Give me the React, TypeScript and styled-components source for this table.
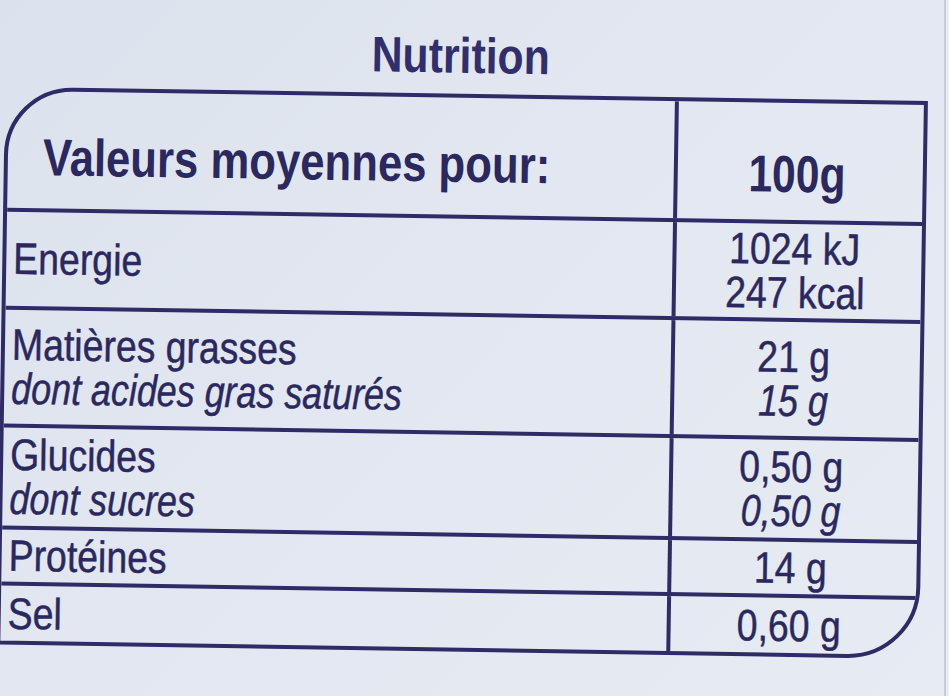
import React from "react";
import styled, { createGlobalStyle } from "styled-components";

const INK = "#2a285f";
const LINE = "#2e2b66";

const GlobalStyle = createGlobalStyle`
  html, body { margin: 0; padding: 0; }
  body { background: #e2e7f1; overflow: hidden; }
  * { box-sizing: border-box; }
`;

const Page = styled.div`
  width: 949px;
  height: 696px;
  overflow: hidden;
  display: flex;
  background: linear-gradient(135deg, #dce2ed 0%, #e2e7f1 45%, #e7ebf3 100%);
  font-family: "Liberation Sans", Arial, Helvetica, sans-serif;
  color: ${INK};
`;

const Label = styled.div`
  width: 944px;
  height: 696px;
  flex: none;
  padding: 31px 0 0 1px;
  display: flex;
  flex-direction: column;
  transform: rotate(0.9deg);
  transform-origin: 474px 348px;
`;

const Fold = styled.div`
  width: 2px;
  height: 696px;
  flex: none;
  background: #c8ccd9;
`;

const Edge = styled.div`
  flex: 1;
  background: #e6eaf3;
`;

const TitleRow = styled.div`
  width: 923px;
  height: 63px;
  display: flex;
  justify-content: center;
  padding-right: 12px;
`;

const Title = styled.h1`
  margin: 0;
  font-size: 50px;
  line-height: 50px;
  font-weight: 700;
  color: #302e6c;
  white-space: nowrap;
  transform: scaleX(0.855);
`;

const Table = styled.div`
  width: 923px;
  border: 4px solid ${LINE};
  border-radius: 68px 0 72px 0;
  overflow: hidden;
  display: flex;
  flex-direction: column;
`;

const Row = styled.div<{ $h: number; $last?: boolean }>`
  height: ${(p) => p.$h}px;
  flex: none;
  display: grid;
  grid-template-columns: 670px 1fr;
  border-bottom: ${(p) => (p.$last ? "none" : `4px solid ${LINE}`)};
`;

const LabelCell = styled.div`
  border-right: 4px solid ${LINE};
  display: flex;
  flex-direction: column;
  justify-content: center;
  padding-left: 7px;
`;

const ValueCell = styled.div`
  display: flex;
  flex-direction: column;
  justify-content: center;
  align-items: center;
  padding-right: 8px;
`;

const HeaderLabelCell = styled.div`
  border-right: 4px solid ${LINE};
  padding: 40px 0 0 35px;
`;

const HeaderValueCell = styled.div`
  display: flex;
  justify-content: center;
  align-items: flex-start;
  padding: 45px 6px 0 0;
`;

const HeaderText = styled.div<{ $center?: boolean }>`
  font-size: 52px;
  line-height: 52px;
  font-weight: 700;
  white-space: nowrap;
  transform: scaleX(${(p) => (p.$center ? 0.82 : 0.84)});
  transform-origin: ${(p) => (p.$center ? "center" : "left")} center;
`;

const Text = styled.div<{ $italic?: boolean; $center?: boolean }>`
  font-size: 44px;
  line-height: 44px;
  font-weight: 400;
  font-style: ${(p) => (p.$italic ? "italic" : "normal")};
  white-space: nowrap;
  -webkit-text-stroke: 0.5px ${INK};
  transform: scaleX(${(p) => (p.$italic ? 0.815 : 0.85)});
  transform-origin: ${(p) => (p.$center ? "center" : "left")} center;
`;

type Line = { text: string; italic?: boolean };
type Item = { h: number; label: Line[]; value: Line[] };

const items: Item[] = [
  { h: 98, label: [{ text: "Energie" }], value: [{ text: "1024 kJ" }, { text: "247 kcal" }] },
  {
    h: 118,
    label: [{ text: "Matières grasses" }, { text: "dont acides gras saturés", italic: true }],
    value: [{ text: "21 g" }, { text: "15 g", italic: true }],
  },
  {
    h: 102,
    label: [{ text: "Glucides" }, { text: "dont sucres", italic: true }],
    value: [{ text: "0,50 g" }, { text: "0,50 g", italic: true }],
  },
  { h: 56, label: [{ text: "Protéines" }], value: [{ text: "14 g" }] },
  { h: 55, label: [{ text: "Sel" }], value: [{ text: "0,60 g" }] },
];

export default function App() {
  return (
    <>
      <GlobalStyle />
      <Page>
        <Label>
          <TitleRow>
            <Title>Nutrition</Title>
          </TitleRow>
          <Table>
            <Row $h={121}>
              <HeaderLabelCell>
                <HeaderText>Valeurs moyennes pour:</HeaderText>
              </HeaderLabelCell>
              <HeaderValueCell>
                <HeaderText $center>100g</HeaderText>
              </HeaderValueCell>
            </Row>
            {items.map((it, i) => (
              <Row key={i} $h={it.h} $last={i === items.length - 1}>
                <LabelCell>
                  {it.label.map((l, j) => (
                    <Text key={j} $italic={l.italic}>
                      {l.text}
                    </Text>
                  ))}
                </LabelCell>
                <ValueCell>
                  {it.value.map((l, j) => (
                    <Text key={j} $italic={l.italic} $center>
                      {l.text}
                    </Text>
                  ))}
                </ValueCell>
              </Row>
            ))}
          </Table>
        </Label>
        <Fold />
        <Edge />
      </Page>
    </>
  );
}
